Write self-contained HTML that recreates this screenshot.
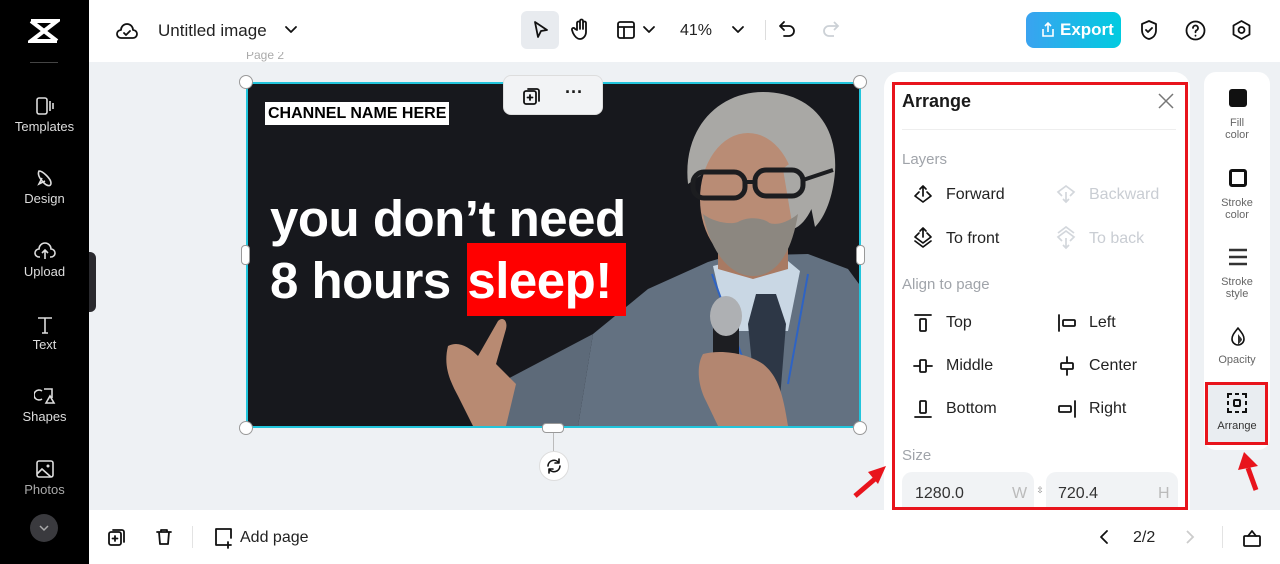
<!DOCTYPE html>
<html><head><meta charset="utf-8"><style>
*{box-sizing:border-box;margin:0;padding:0}
body{width:1280px;height:564px;overflow:hidden;background:#eef1f4;font-family:"Liberation Sans",sans-serif;position:relative;color:#1a1a1a}
.abs{position:absolute}
.side{left:0;top:0;width:89px;height:564px;background:#000}
.si{position:absolute;left:0;width:89px;text-align:center;color:#ddd;font-size:13px}
.si svg{display:block;margin:0 auto 3px}
.top{left:89px;top:0;width:1191px;height:62px;background:#fff}
.bot{left:89px;top:510px;width:1191px;height:54px;background:#fff}
.ic{stroke:#111;fill:none;stroke-width:1.8;stroke-linecap:round;stroke-linejoin:round}
.pr{font-size:16px;color:#222}
.gr{color:#c9cdd3}
.sec{font-size:15px;color:#a0a4aa}
.tb{position:absolute;left:0;width:64px;text-align:center;font-size:11px;color:#666;line-height:12px}
</style></head><body>
<div class="abs side">
 <svg class="abs" style="left:28px;top:18px" width="32" height="26" viewBox="0 0 32 26"><path d="M3 3h26L3 23h26M3 3l26 20" stroke="#fff" stroke-width="4" fill="none"/></svg>
 <div class="abs" style="left:30px;top:62px;width:28px;height:1px;background:#444"></div>
 <div class="si" style="top:96px"><svg width="22" height="20" viewBox="0 0 22 20"><rect x="3" y="2" width="10" height="16" rx="2" stroke="#ddd" fill="none" stroke-width="1.6"/><path d="M16 5v10M19 7v6" stroke="#ddd" stroke-width="1.6"/></svg>Templates</div>
 <div class="si" style="top:168px"><svg width="22" height="20" viewBox="0 0 22 20"><path d="M5 3c4 0 12 8 12 12s-4 3-7 0-7-8-5-12zM8 10l-3 6 6-3" stroke="#ddd" fill="none" stroke-width="1.6"/></svg>Design</div>
 <div class="si" style="top:241px"><svg width="24" height="20" viewBox="0 0 24 20"><path d="M7 16H6a4 4 0 0 1 0-8 6 6 0 0 1 12 0 4 4 0 0 1 0 8h-1M12 18v-8M9 12l3-3 3 3" stroke="#ddd" fill="none" stroke-width="1.6"/></svg>Upload</div>
 <div class="si" style="top:314px"><svg width="22" height="20" viewBox="0 0 22 20"><path d="M4 4h14M11 4v15M8 19h6" stroke="#ddd" fill="none" stroke-width="1.6"/></svg>Text</div>
 <div class="si" style="top:386px"><svg width="22" height="20" viewBox="0 0 22 20"><path d="M8 5a5 5 0 1 0 0 8M10 3h8v9M12 17l4-7 4 7z" stroke="#ddd" fill="none" stroke-width="1.6"/></svg>Shapes</div>
 <div class="si" style="top:459px;color:#aaa"><svg width="22" height="20" viewBox="0 0 22 20"><rect x="3" y="2" width="16" height="16" rx="2" stroke="#ddd" fill="none" stroke-width="1.6"/><path d="M3 15l5-5 9 8" stroke="#ddd" fill="none" stroke-width="1.6"/><circle cx="14" cy="7" r="1.5" fill="#ddd"/></svg>Photos</div>
 <div class="abs" style="left:30px;top:514px;width:28px;height:28px;border-radius:50%;background:#3a3a3e"><svg width="28" height="28"><path d="M10 12l4 4 4-4" stroke="#aaa" fill="none" stroke-width="1.5"/></svg></div>
</div>
<div class="abs" style="left:89px;top:252px;width:7px;height:60px;background:#2a2a2e;border-radius:0 6px 6px 0"></div>

<div class="abs top">
 <svg class="abs ic" style="left:26px;top:20px" width="24" height="22" viewBox="0 0 24 22"><path d="M7 18H6a4 4 0 0 1 0-8 6 6 0 0 1 12 0 4 4 0 0 1 0 8H7M9 13l2 2 4-4"/></svg>
 <div class="abs pr" style="left:69px;top:21px;font-size:17px">Untitled image</div>
 <svg class="abs ic" style="left:195px;top:24px" width="14" height="12"><path d="M2 3l5 5 5-5"/></svg>
 <div class="abs" style="left:432px;top:11px;width:38px;height:38px;background:#e8ebef;border-radius:6px"></div>
 <svg class="abs ic" style="left:443px;top:20px" width="18" height="20"><path d="M3 2l12 8-6 1-3 6z"/></svg>
 <svg class="abs ic" style="left:481px;top:18px" width="22" height="24"><path d="M7 12V5a1.5 1.5 0 0 1 3 0v6V3a1.5 1.5 0 0 1 3 0v8V5a1.5 1.5 0 0 1 3 0v9c0 4-3 7-6 7s-5-2-7-6l-1-3a1.5 1.5 0 0 1 3-1z"/></svg>
 <svg class="abs ic" style="left:527px;top:20px" width="20" height="20"><rect x="2" y="2" width="16" height="16" rx="2"/><path d="M2 7h16M8 7v11"/></svg>
 <svg class="abs ic" style="left:553px;top:24px" width="14" height="12"><path d="M2 3l5 5 5-5"/></svg>
 <div class="abs pr" style="left:591px;top:22px">41%</div>
 <svg class="abs ic" style="left:642px;top:24px" width="14" height="12"><path d="M2 3l5 5 5-5"/></svg>
 <div class="abs" style="left:676px;top:20px;width:1px;height:20px;background:#ddd"></div>
 <svg class="abs ic" style="left:689px;top:19px" width="20" height="22"><path d="M6 3L2 7l4 4M2 7h9a5 5 0 0 1 0 10H6"/></svg>
 <svg class="abs" style="left:731px;top:19px;stroke:#ccd1d6;fill:none;stroke-width:1.8" width="20" height="22"><path d="M14 3l4 4-4 4M18 7H9a5 5 0 0 0 0 10h5"/></svg>
 <div class="abs" style="left:937px;top:12px;width:95px;height:36px;border-radius:8px;background:linear-gradient(90deg,#3aa3f0,#00cbe0);color:#fff;font-weight:bold;font-size:17px;padding:8px 0 0 34px">Export</div>
 <svg class="abs" style="left:951px;top:21px;stroke:#fff;fill:none;stroke-width:1.6" width="16" height="18"><path d="M8 11V2M5 5l3-3 3 3M3 8v7h10V8"/></svg>
 <svg class="abs ic" style="left:1050px;top:19px" width="20" height="22"><path d="M10 2l7 3v6c0 5-3 8-7 9-4-1-7-4-7-9V5zM7 11l2 2 4-4"/></svg>
 <svg class="abs ic" style="left:1096px;top:20px" width="21" height="21"><circle cx="10.5" cy="10.5" r="9"/><path d="M8 8a2.5 2.5 0 1 1 3.5 2.3c-1 .4-1 1-1 2M10.5 15.5v.3"/></svg>
 <svg class="abs ic" style="left:1142px;top:19px" width="21" height="22"><path d="M10.5 2l8 4.5v9l-8 4.5-8-4.5v-9z"/><circle cx="10.5" cy="11" r="3"/></svg>
</div>

<div class="abs" style="left:246px;top:52px;font-size:12px;color:#aaa;height:10px;overflow:hidden;line-height:6px">Page 2</div>
<!-- canvas image -->
<div class="abs" style="left:246px;top:82px;width:615px;height:346px;background:#17181d;border:2px solid #22c5dc;overflow:hidden">
 <svg class="abs" style="left:0;top:0" width="611" height="342" viewBox="0 0 611 342">
  <!-- suit body -->
  <path d="M330 342L345 250 400 205 460 178 480 172 560 170 600 185 611 200V342z" fill="#637181"/>
  <!-- extended arm -->
  <path d="M345 250L250 300 225 342H330z" fill="#5d6a79"/>
  <!-- hand left -->
  <path d="M200 262c10-5 20 0 30 10l20 -35c5-5 10 0 8 8l-10 35 20 20-10 42H225l-15-30c-8-15-15-30-10-50z" fill="#b88a72"/>
  <!-- shirt -->
  <path d="M465 182l20 -5 55 0 12 10-12 60h-60z" fill="#c9d7e4"/>
  <!-- tie -->
  <path d="M508 210l20 0 10 30-8 100h-20l-10-100z" fill="#2d3746"/>
  <!-- lanyard -->
  <path d="M464 190l40 110M560 190l-20 110" stroke="#2e63c4" stroke-width="2" fill="none"/>
  <!-- neck -->
  <path d="M470 150h70v35l-35 10-35-10z" fill="#a87a63"/>
  <!-- hair -->
  <path d="M440 100c-6-55 30-92 75-92 45 0 75 30 72 80-2 25-10 45-20 55l-10-50c-20-15-70-12-95-8z" fill="#a9a8a5"/>
  <!-- face -->
  <ellipse cx="500" cy="115" rx="48" ry="66" fill="#b98c75"/>
  <path d="M535 85c10-10 30-15 40 0-5 30-15 55-30 60z" fill="#a9a8a5"/>
  <!-- beard -->
  <path d="M455 130c8 40 28 62 50 62s38-20 45-62c-12 10-25 12-30 8-8-5-22-5-30 0-8 3-25 0-35-8z" fill="#8c8780"/>
  <!-- glasses -->
  <rect x="445" y="88" width="52" height="26" rx="11" fill="none" stroke="#1c1d20" stroke-width="5"/>
  <rect x="507" y="86" width="48" height="26" rx="11" fill="none" stroke="#1c1d20" stroke-width="5"/>
  <path d="M497 98h10M555 96l30-10" stroke="#1c1d20" stroke-width="4"/>
  <!-- mic -->
  <rect x="465" y="240" width="26" height="95" rx="5" fill="#1d1e22"/>
  <ellipse cx="478" cy="232" rx="16" ry="20" fill="#aeb0b3"/>
  <!-- right hand -->
  <path d="M455 270c20-5 45 0 60 10 15 12 20 30 25 62H470l-12-25c-8-15-10-35-3-47z" fill="#b38670"/>
 </svg>
 <div class="abs" style="left:17px;top:18px;background:#fff;color:#000;font-weight:bold;font-size:16px;padding:3px 3px 2px">CHANNEL NAME HERE</div>
 <div class="abs" style="left:219px;top:159px;width:159px;height:73px;background:#f00"></div>
 <div class="abs" style="left:22px;top:104px;color:#fff;font-weight:bold;font-size:51px;line-height:62px;letter-spacing:-0.5px;white-space:nowrap">you don’t need<br>8 hours <span style="margin-left:3px">sleep!</span></div>
</div>
<div class="abs" style="left:503px;top:75px;width:100px;height:40px;background:#f2f3f5;border:1px solid #ddd;border-radius:8px"></div>
<svg class="abs ic" style="left:522px;top:86px" width="20" height="20"><rect x="2" y="5" width="12" height="13" rx="2"/><path d="M6 3h9a2 2 0 0 1 2 2v10M8 9v5M5.5 11.5h5"/></svg>
<div class="abs" style="left:565px;top:82px;font-size:18px;font-weight:bold">···</div>
<!-- handles -->
<div class="abs" style="left:239px;top:75px;width:14px;height:14px;border-radius:50%;background:#fff;border:1px solid #999"></div>
<div class="abs" style="left:853px;top:75px;width:14px;height:14px;border-radius:50%;background:#fff;border:1px solid #999"></div>
<div class="abs" style="left:239px;top:421px;width:14px;height:14px;border-radius:50%;background:#fff;border:1px solid #999"></div>
<div class="abs" style="left:853px;top:421px;width:14px;height:14px;border-radius:50%;background:#fff;border:1px solid #999"></div>
<div class="abs" style="left:241px;top:245px;width:9px;height:20px;border-radius:4px;background:#fff;border:1px solid #999"></div>
<div class="abs" style="left:856px;top:245px;width:9px;height:20px;border-radius:4px;background:#fff;border:1px solid #999"></div>
<div class="abs" style="left:542px;top:423px;width:22px;height:10px;border-radius:4px;background:#fff;border:1px solid #999"></div>
<div class="abs" style="left:553px;top:433px;width:1px;height:18px;background:#bbb"></div>
<div class="abs" style="left:539px;top:451px;width:30px;height:30px;border-radius:50%;background:#fff;border:1px solid #ddd"></div>
<svg class="abs ic" style="left:545px;top:457px;stroke-width:1.6" width="18" height="18"><path d="M3 9a6 6 0 0 1 11-3M15 9a6 6 0 0 1-11 3M14 2v4h-4M4 16v-4h4"/></svg>

<!-- arrange panel -->
<div class="abs" style="left:884px;top:72px;width:306px;height:438px;background:#fff;border-radius:16px 16px 0 0"></div>
<div class="abs" style="left:892px;top:82px;width:296px;height:428px;border:3px solid #e8141c"></div>
<div class="abs" style="left:902px;top:91px;font-weight:bold;font-size:18px">Arrange</div>
<svg class="abs" style="left:1158px;top:93px;stroke:#777;stroke-width:1.5" width="16" height="16"><path d="M1 1l14 14M15 1L1 15"/></svg>
<div class="abs" style="left:902px;top:129px;width:274px;height:1px;background:#eee"></div>
<div class="abs sec" style="left:902px;top:151px">Layers</div>
<svg class="abs ic" style="left:913px;top:184px;stroke-width:1.7" width="20" height="20"><path d="M10 12V2M7 5l3-3 3 3M6 8l-4 4 8 6 8-6-4-4"/></svg>
<div class="abs pr" style="left:946px;top:186px">Forward</div>
<svg class="abs" style="left:1056px;top:184px;stroke:#d3d7dc;fill:none;stroke-width:1.7" width="20" height="20"><path d="M10 8v10M7 15l3 3 3-3M6 12L2 8l8-6 8 6-4 4"/></svg>
<div class="abs pr gr" style="left:1089px;top:186px">Backward</div>
<svg class="abs ic" style="left:913px;top:226px;stroke-width:1.7" width="20" height="24"><path d="M10 11V2M7 5l3-3 3 3M6 7l-4 4 8 6 8-6-4-4M2 15l8 6 8-6"/></svg>
<div class="abs pr" style="left:946px;top:230px">To front</div>
<svg class="abs" style="left:1056px;top:226px;stroke:#d3d7dc;fill:none;stroke-width:1.7" width="20" height="24"><path d="M10 12v10M7 19l3 3 3-3M6 15l-4-4 8-6 8 6-4 4M2 7l8-6 8 6"/></svg>
<div class="abs pr gr" style="left:1089px;top:230px">To back</div>
<div class="abs sec" style="left:902px;top:276px">Align to page</div>
<svg class="abs ic" style="left:914px;top:313px;stroke-width:1.8" width="18" height="20"><path d="M1 2h16"/><rect x="6" y="6" width="6" height="12" rx="1"/></svg>
<div class="abs pr" style="left:946px;top:314px">Top</div>
<svg class="abs ic" style="left:1057px;top:313px;stroke-width:1.8" width="20" height="20"><path d="M2 2v16"/><rect x="6" y="7" width="12" height="6" rx="1"/></svg>
<div class="abs pr" style="left:1089px;top:314px">Left</div>
<svg class="abs ic" style="left:913px;top:356px;stroke-width:1.8" width="20" height="20"><path d="M1 10h5M14 10h5"/><rect x="7" y="4" width="6" height="12" rx="1"/></svg>
<div class="abs pr" style="left:946px;top:357px">Middle</div>
<svg class="abs ic" style="left:1057px;top:356px;stroke-width:1.8" width="20" height="20"><path d="M10 1v5M10 14v5"/><rect x="4" y="7" width="12" height="6" rx="1"/></svg>
<div class="abs pr" style="left:1089px;top:357px">Center</div>
<svg class="abs ic" style="left:914px;top:398px;stroke-width:1.8" width="18" height="22"><path d="M1 19h16"/><rect x="6" y="3" width="6" height="12" rx="1"/></svg>
<div class="abs pr" style="left:946px;top:400px">Bottom</div>
<svg class="abs ic" style="left:1057px;top:399px;stroke-width:1.8" width="20" height="20"><path d="M18 2v16"/><rect x="2" y="7" width="12" height="6" rx="1"/></svg>
<div class="abs pr" style="left:1089px;top:400px">Right</div>
<div class="abs sec" style="left:902px;top:447px">Size</div>
<div class="abs" style="left:902px;top:472px;width:132px;height:35px;background:#f1f3f5;border-radius:10px 10px 0 0"></div>
<div class="abs" style="left:1046px;top:472px;width:132px;height:35px;background:#f1f3f5;border-radius:10px 10px 0 0"></div>
<div class="abs pr" style="left:915px;top:485px;color:#333">1280.0</div>
<div class="abs pr" style="left:1012px;top:485px;color:#bbb">W</div>
<div class="abs" style="left:1034px;top:481px;width:12px;height:18px;background:#fff;border-radius:4px;font-size:9px;color:#888;text-align:center;line-height:18px">⇳</div>
<div class="abs pr" style="left:1058px;top:485px;color:#333">720.4</div>
<div class="abs pr" style="left:1158px;top:485px;color:#bbb">H</div>

<!-- right toolbar -->
<div class="abs" style="left:1204px;top:72px;width:66px;height:378px;background:#fff;border-radius:12px"></div>
<div class="abs" style="left:1229px;top:89px;width:18px;height:18px;background:#111;border-radius:3px"></div>
<div class="tb" style="left:1205px;top:117px">Fill<br>color</div>
<div class="abs" style="left:1229px;top:169px;width:18px;height:18px;border:3px solid #111;border-radius:3px"></div>
<div class="tb" style="left:1205px;top:197px">Stroke<br>color</div>
<svg class="abs" style="left:1228px;top:247px" width="20" height="20"><path d="M1 3h18M1 10h18M1 17h18" stroke="#333" stroke-width="2.5"/></svg>
<div class="tb" style="left:1205px;top:276px">Stroke<br>style</div>
<svg class="abs ic" style="left:1228px;top:326px;stroke-width:1.6" width="20" height="20"><path d="M10 2c3 4 6 7 6 11a6 6 0 0 1-12 0c0-4 3-7 6-11z"/><path d="M10 19V8c2 3 4 4 4 6" fill="#333" stroke="none"/></svg>
<div class="tb" style="left:1205px;top:354px">Opacity</div>
<div class="abs" style="left:1205px;top:382px;width:63px;height:63px;border:3px solid #e8141c;background:#e9edf1"></div>
<svg class="abs" style="left:1226px;top:392px;stroke:#111;fill:none;stroke-width:2" width="22" height="22"><path d="M2 6V2h4M16 2h4v4M20 16v4h-4M6 20H2v-4M9 2h4M9 20h4M2 9v4M20 9v4"/><rect x="8" y="8" width="6" height="6" rx="1"/></svg>
<div class="tb" style="left:1205px;top:420px;color:#333">Arrange</div>
<!-- arrows -->
<svg class="abs" style="left:850px;top:464px" width="40" height="36"><path d="M5 32L26 14" stroke="#e8141c" stroke-width="5"/><path d="M18 8l18-6-8 18z" fill="#e8141c"/></svg>
<svg class="abs" style="left:1236px;top:450px" width="28" height="42"><path d="M20 40L12 18" stroke="#e8141c" stroke-width="5"/><path d="M2 20l6-18 14 14z" fill="#e8141c"/></svg>

<div class="abs bot">
 <svg class="abs ic" style="left:18px;top:17px" width="20" height="20"><rect x="2" y="5" width="12" height="13" rx="2"/><path d="M6 3h9a2 2 0 0 1 2 2v10M8 9v5M5.5 11.5h5"/></svg>
 <svg class="abs ic" style="left:65px;top:17px" width="20" height="20"><path d="M3 5h14M7 5V3h6v2M5 5l1 12h8l1-12"/></svg>
 <div class="abs" style="left:103px;top:16px;width:1px;height:22px;background:#e3e3e3"></div>
 <svg class="abs ic" style="left:124px;top:17px" width="22" height="22"><path d="M12 18H3V2h15v9M15 15v6M12 18h6"/></svg>
 <div class="abs pr" style="left:151px;top:19px;font-size:16px">Add page</div>
 <svg class="abs ic" style="left:1008px;top:19px" width="14" height="16"><path d="M10 2L4 8l6 6"/></svg>
 <div class="abs pr" style="left:1044px;top:19px">2/2</div>
 <svg class="abs" style="left:1094px;top:19px;stroke:#ccc;fill:none;stroke-width:1.8" width="14" height="16"><path d="M4 2l6 6-6 6"/></svg>
 <div class="abs" style="left:1133px;top:16px;width:1px;height:22px;background:#e3e3e3"></div>
 <svg class="abs ic" style="left:1152px;top:16px" width="22" height="22"><rect x="3" y="10" width="16" height="10" rx="1"/><path d="M7 10l4-5 4 5"/></svg>
</div>
</body></html>
